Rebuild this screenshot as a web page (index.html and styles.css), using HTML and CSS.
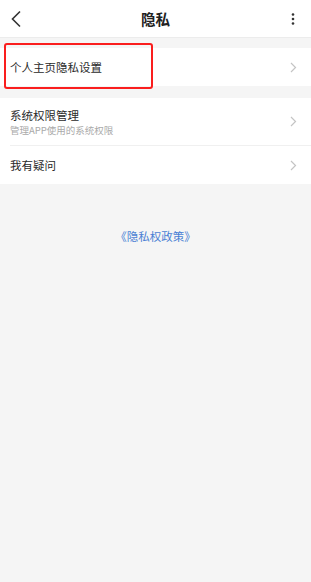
FILE: index.html
```html
<!DOCTYPE html>
<html lang="zh">
<head>
<meta charset="utf-8">
<link rel="stylesheet" href="styles.css">
</head>
<body>
<div class="page">
  <header class="topbar">
    <svg class="back" width="14" height="18" viewBox="0 0 14 18"><path d="M11 1.5 L3.5 9 L11 16.5" fill="none" stroke="#333" stroke-width="1.6"/></svg>
    <div class="title">隐私</div>
    <svg class="more" width="6" height="14" viewBox="0 0 6 14"><circle cx="3" cy="2.5" r="1.3" fill="#333"/><circle cx="3" cy="7" r="1.3" fill="#333"/><circle cx="3" cy="11.5" r="1.3" fill="#333"/></svg>
  </header>
  <section class="group first">
    <div class="row">
      <span class="label">个人主页隐私设置</span>
      <svg class="chev" width="7" height="11" viewBox="0 0 7 11"><path d="M1 1 L5.5 5.5 L1 10" fill="none" stroke="#c4c4c4" stroke-width="1.2"/></svg>
    </div>
    <div class="highlight"></div>
  </section>
  <section class="group">
    <div class="row tall">
      <div class="texts">
        <span class="label">系统权限管理</span>
        <span class="sub">管理APP使用的系统权限</span>
      </div>
      <svg class="chev" width="7" height="11" viewBox="0 0 7 11"><path d="M1 1 L5.5 5.5 L1 10" fill="none" stroke="#c4c4c4" stroke-width="1.2"/></svg>
    </div>
    <div class="divider"></div>
    <div class="row">
      <span class="label">我有疑问</span>
      <svg class="chev" width="7" height="11" viewBox="0 0 7 11"><path d="M1 1 L5.5 5.5 L1 10" fill="none" stroke="#c4c4c4" stroke-width="1.2"/></svg>
    </div>
  </section>
  <div class="policy">《隐私权政策》</div>
</div>
</body>
</html>
```
FILE: styles.css
```css
html, body { margin: 0; padding: 0; }
body {
  width: 311px; height: 582px; background: #f5f5f5;
  font-family: "Noto Sans CJK SC", "Noto Sans", sans-serif;
  overflow: hidden;
}
.page { display: flex; flex-direction: column; }
.topbar {
  height: 38px; background: #fff; border-bottom: 1px solid #ececec;
  display: flex; align-items: center; justify-content: space-between;
  padding: 0 15px 0 9px; position: relative; box-sizing: border-box;
}
.title {
  position: absolute; left: 0; right: 0; text-align: center;
  font-size: 14.5px; font-weight: 700; color: #222; line-height: 38px;
  pointer-events: none;
}
.group { background: #fff; margin-top: 10px; position: relative; }
.group.first { margin-top: 10px; }
.group + .group { margin-top: 12px; }
.row {
  height: 38px; display: flex; align-items: center; justify-content: space-between;
  padding: 0 14px 0 10px;
}
.row.tall { height: 47px; }
.texts { display: flex; flex-direction: column; }
.label { font-size: 11.5px; color: #2a2a2a; line-height: 16px; }
.sub { font-size: 9.5px; color: #aaa; line-height: 13px; margin-top: 1px; }
.divider { height: 1px; background: #f0f0f0; margin-left: 10px; }
.highlight {
  position: absolute; left: 4px; top: -5px; width: 145px; height: 42px;
  border: 2px solid #fa1e1e; border-radius: 3px;
}
.policy {
  text-align: center; margin-top: 44px; font-size: 11.5px; color: #4a7fd4; line-height: 16px;
}
```
